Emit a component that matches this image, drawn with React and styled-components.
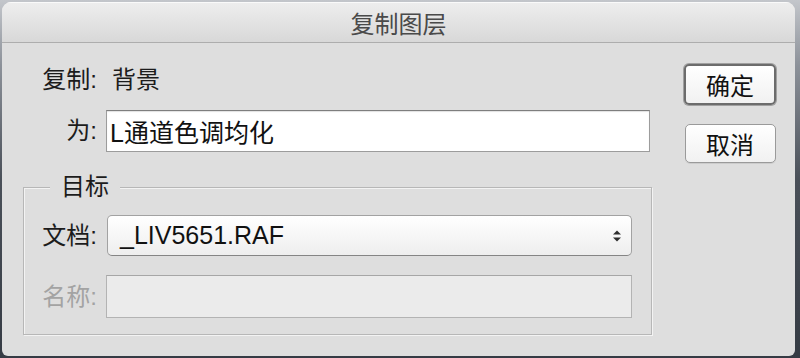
import styled, { createGlobalStyle } from "styled-components";

const GlobalStyle = createGlobalStyle`
  html, body {
    margin: 0;
    padding: 0;
  }
  body {
    width: 800px;
    height: 358px;
    overflow: hidden;
    background: linear-gradient(180deg, #c3c6cb 0%, #8d929a 18%, #4a5059 50%, #353b44 100%);
    font-family: "Liberation Sans", "Noto Sans CJK SC", sans-serif;
  }
`;

const Window = styled.div`
  margin: 2px 5px 0 2px;
  height: 354px;
  background: #dedede;
  border-radius: 9px 9px 6px 6px;
  display: flex;
  flex-direction: column;
  overflow: hidden;
`;

const TitleBar = styled.div`
  height: 40px;
  flex-shrink: 0;
  border-bottom: 1px solid #adadad;
  background: linear-gradient(#eeeeee, #d8d8d8);
  box-shadow: inset 0 1px 0 #fafafa;
  display: flex;
  align-items: center;
  justify-content: center;
  font-size: 24px;
  color: #4a4a4a;
`;

const Body = styled.div`
  display: flex;
  padding: 22px 0 0 21px;
`;

const Form = styled.div`
  width: 629px;
  display: flex;
  flex-direction: column;
`;

const TopGrid = styled.div`
  display: grid;
  grid-template-columns: 66px 544px;
  row-gap: 15px;
  padding-left: 17px;
  align-items: center;
`;

const Label = styled.div`
  text-align: right;
  padding-right: 9px;
  font-size: 24px;
  line-height: 30px;
  white-space: nowrap;
  color: ${(p) => (p.$disabled ? "#a3a3a3" : "#1c1c1c")};
`;

const Value = styled.div`
  padding-left: 6px;
  font-size: 24px;
  line-height: 30px;
  color: #1c1c1c;
`;

const TextField = styled.input`
  box-sizing: border-box;
  height: 42px;
  width: 100%;
  margin: 0;
  padding: 0 3px;
  border: 1px solid #9c9c9c;
  border-top-color: #7e7e7e;
  background: #ffffff;
  box-shadow: inset 0 1px 1px rgba(0, 0, 0, 0.12);
  font-family: inherit;
  font-size: 25px;
  color: #111;
  outline: none;
`;

const Group = styled.fieldset`
  margin: 22px 0 0 0;
  padding: 0 19px 16px 15px;
  min-width: 0;
  border: 1px solid #b7b7b7;
  box-shadow: 1px 1px 0 #f3f3f3, inset 1px 1px 0 #f3f3f3;
`;

const Legend = styled.legend`
  margin-left: 11px;
  padding: 0 11px;
  font-size: 24px;
  line-height: 26px;
  color: #1c1c1c;
  background: #dedede;
`;

const GroupGrid = styled.div`
  display: grid;
  grid-template-columns: 67px 1fr;
  row-gap: 19px;
  padding-top: 15px;
  align-items: center;
`;

const Popup = styled.div`
  box-sizing: border-box;
  height: 41px;
  margin-left: 1px;
  display: flex;
  align-items: center;
  justify-content: space-between;
  padding: 0 9px 0 12px;
  border: 1px solid #a2a2a2;
  border-bottom-color: #858585;
  border-radius: 5px;
  background: linear-gradient(#ffffff, #eeeeee);
  font-size: 25px;
  color: #111;
`;

const DisabledField = styled.div`
  box-sizing: border-box;
  height: 43px;
  border: 1px solid #b3b3b3;
  border-top-color: #a6a6a6;
  background: #ebebeb;
`;

const ButtonColumn = styled.div`
  margin-left: 31px;
  margin-top: -2px;
  width: 94px;
  display: flex;
  flex-direction: column;
  align-items: center;
  gap: 19px;
`;

const Button = styled.div`
  box-sizing: border-box;
  display: flex;
  align-items: center;
  justify-content: center;
  width: ${(p) => (p.$default ? "92px" : "91px")};
  height: ${(p) => (p.$default ? "41px" : "39px")};
  margin-top: ${(p) => (p.$default ? "1px" : "0")};
  border: ${(p) => (p.$default ? "2px solid #6c6c6c" : "1px solid #9a9a9a")};
  border-radius: 5px;
  box-shadow: ${(p) =>
    p.$default ? "0 0 0 1px rgba(110,110,110,0.55)" : "0 1px 0 rgba(0,0,0,0.08)"};
  background: linear-gradient(#ffffff, #f1f1f1);
  font-size: 24px;
  color: #111;
`;

const Arrows = () => (
  <svg width="10" height="14" viewBox="0 0 10 14">
    <path d="M1 5.5 L5 1.5 L9 5.5 Z" fill="#2e2e2e" />
    <path d="M1 8.5 L5 12.5 L9 8.5 Z" fill="#2e2e2e" />
  </svg>
);

export default function App() {
  return (
    <>
      <GlobalStyle />
      <Window>
        <TitleBar>复制图层</TitleBar>
        <Body>
          <Form>
            <TopGrid>
              <Label>复制:</Label>
              <Value>背景</Value>
              <Label>为:</Label>
              <TextField defaultValue="L通道色调均化" />
            </TopGrid>
            <Group>
              <Legend>目标</Legend>
              <GroupGrid>
                <Label>文档:</Label>
                <Popup>
                  <span>_LIV5651.RAF</span>
                  <Arrows />
                </Popup>
                <Label $disabled>名称:</Label>
                <DisabledField />
              </GroupGrid>
            </Group>
          </Form>
          <ButtonColumn>
            <Button $default>确定</Button>
            <Button>取消</Button>
          </ButtonColumn>
        </Body>
      </Window>
    </>
  );
}
